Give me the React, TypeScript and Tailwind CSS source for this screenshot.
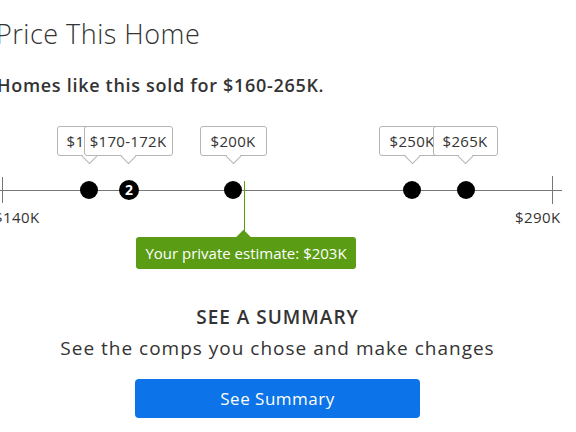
import React from "react";

const font = { fontFamily: '"Open Sans", "Liberation Sans", sans-serif' };

type Tip = { label: string; x: number; w: number };

const tips: Tip[] = [
  { label: "$165K", x: 89, w: 65 },
  { label: "$170-172K", x: 128, w: 89 },
  { label: "$200K", x: 233, w: 67 },
  { label: "$250K", x: 412, w: 67 },
  { label: "$265K", x: 465, w: 65 },
];

const dots = [89, 233, 412, 466];

export default function App() {
  return (
    <div className="w-[576px] h-[432px] bg-white overflow-hidden text-[#333]" style={font}>
      <h1 className="pt-[18px] -ml-[4px] text-[27px] leading-[32px] font-light tracking-[0.5px] text-[#333]">
        Price This Home
      </h1>
      <p className="mt-[23px] -ml-[3px] text-[18px] leading-[24px] font-semibold tracking-[0.7px] text-[#333]">
        Homes like this sold for $160-265K.
      </p>

      <div className="relative mt-[22px] h-[160px]">
        {/* axis line */}
        <div className="absolute left-0 top-[71px] w-[562px] h-px bg-[#777]" />
        <div className="absolute left-[2px] top-[58px] w-px h-[26px] bg-[#777]" />
        <div className="absolute left-[552px] top-[57px] w-px h-[28px] bg-[#777]" />
        <div className="absolute left-[-6px] top-[89px] text-[15px] leading-[18px] tracking-[0.4px] text-[#333]">$140K</div>
        <div className="absolute left-[515px] top-[89px] text-[15px] leading-[18px] tracking-[0.4px] text-[#333]">$290K</div>

        {/* estimate line */}
        <div className="absolute left-[244px] top-[62px] w-px h-[50px] bg-[#5a9c14]" />

        {/* dots */}
        {dots.map((x) => (
          <div
            key={x}
            className="absolute w-[18px] h-[18px] rounded-full bg-black"
            style={{ left: x - 9, top: 62 }}
          />
        ))}
        <div
          className="absolute w-[20px] h-[20px] rounded-full bg-black flex items-center justify-center text-white text-[14px] font-bold leading-none"
          style={{ left: 119, top: 61 }}
        >
          2
        </div>

        {/* tooltips */}
        {tips.map((t) => (
          <div key={t.label} className="absolute" style={{ left: t.x - t.w / 2, top: 7, width: t.w }}>
            <div className="relative h-[30px] bg-white border border-[#b5b5b5] rounded-[3px] flex items-center justify-center text-[15px] tracking-[0.3px] text-[#333] whitespace-nowrap">
              {t.label}
              <div
                className="absolute w-[11px] h-[11px] bg-white border-r border-b border-[#b5b5b5] rotate-45"
                style={{ left: t.w / 2 - 6.5, bottom: -6.5 }}
              />
            </div>
          </div>
        ))}

        {/* estimate tooltip */}
        <div className="absolute left-[136px] top-[118px] w-[220px] h-[32px] rounded-[3px] bg-[#5a9c14] flex items-center justify-center text-white text-[15px] whitespace-nowrap">
          <div className="absolute left-[102px] top-[-5px] w-[11px] h-[11px] bg-[#5a9c14] rotate-45" />
          <span className="relative">Your private estimate: $203K</span>
        </div>
      </div>

      <div className="flex flex-col items-center pr-[21px] mt-[26px]">
        <div className="text-[19px] leading-[24px] font-semibold tracking-[1px] text-[#333]">SEE A SUMMARY</div>
        <div className="mt-[7px] text-[19px] leading-[24px] tracking-[1px] text-[#333]">See the comps you chose and make changes</div>
        <button className="mt-[19px] w-[285px] h-[39px] rounded-[4px] bg-[#0c73e8] text-white text-[17px] tracking-[0.5px]">
          See Summary
        </button>
      </div>
    </div>
  );
}
